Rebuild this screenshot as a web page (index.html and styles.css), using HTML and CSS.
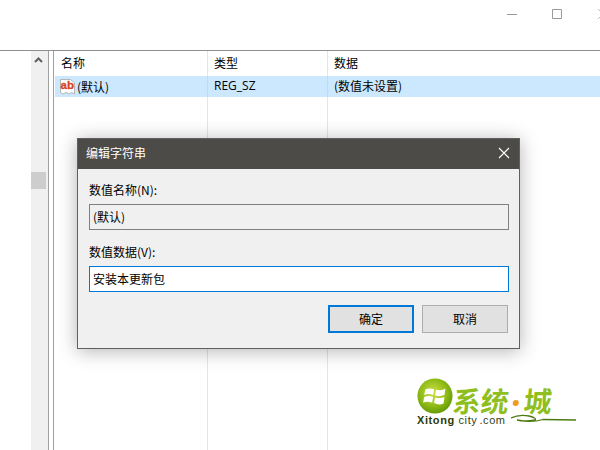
FILE: index.html
```html
<!DOCTYPE html>
<html lang="zh">
<head>
<meta charset="utf-8">
<title>编辑字符串</title>
<link rel="stylesheet" href="styles.css">
</head>
<body>
<div class="window">
  <div class="topbar">
    <svg class="win-icons" width="100" height="30" viewBox="0 0 100 30">
      <path d="M7 14.500H17" stroke="#999" fill="none"/>
      <path d="M52.500 9.500H61.500V18.500H52.500Z" stroke="#999" fill="none"/>
      <path d="M98 9L103 14M98 19L103 14" stroke="#bbb" fill="none"/>
    </svg>
  </div>
  <div class="panes">
    <div class="tree">
      <div class="scroll">
        <svg class="chev" width="9" height="6" viewBox="0 0 9 6"><path d="M1 5L4.500 1.500L8 5" stroke="#606060" stroke-width="2" fill="none"/></svg>
        <div class="thumb"></div>
      </div>
    </div>
    <div class="list">
      <div class="head">
        <div class="c1">名称</div>
        <div class="c2">类型</div>
        <div class="c3">数据</div>
      </div>
      <div class="row">
        <div class="c1 name">
          <svg class="ab" width="17" height="17" viewBox="0 0 17 17">
            <path d="M1.500 1.500H11.500L15.500 5V16L13 14.500L10 16L7 14.500L4 16L1.500 14.500Z" fill="#fff" stroke="#b5b5b5"/>
            <rect x="2" y="3" width="11" height="9" fill="#fff"/>
            <text x="1.500" y="11" class="abtext">ab</text>
          </svg>
          <span>(默认)</span>
        </div>
        <div class="c2">REG_SZ</div>
        <div class="c3">(数值未设置)</div>
      </div>
      <div class="rest">
        <div class="c1"></div>
        <div class="c2"></div>
        <div class="c3"></div>
      </div>
    </div>
  </div>
</div>

<div class="dialog">
  <div class="titlebar">
    <span>编辑字符串</span>
    <svg width="12" height="12" viewBox="0 0 12 12"><path d="M1 1L11 11M11 1L1 11" stroke="#fff" stroke-width="1.100" fill="none"/></svg>
  </div>
  <div class="body">
    <div class="label">数值名称(N):</div>
    <div class="field readonly">(默认)</div>
    <div class="label second">数值数据(V):</div>
    <div class="field active">安装本更新包</div>
    <div class="buttons">
      <div class="btn primary">确定</div>
      <div class="btn">取消</div>
    </div>
  </div>
</div>

<div class="logo">
  <svg class="orb" width="36" height="36" viewBox="0 0 38 38">
    <defs>
      <radialGradient id="g" cx="0.450" cy="0.400" r="0.650">
        <stop offset="0" stop-color="#cfe04a"/>
        <stop offset="0.600" stop-color="#8dba14"/>
        <stop offset="1" stop-color="#5c9406"/>
      </radialGradient>
    </defs>
    <circle cx="19" cy="19" r="18.500" fill="url(#g)"/>
    <path d="M9 12Q13 10 18 12L17 18Q12 16 7.500 18Z M20 12.500Q25 14 30 11L29 18Q24 20 19 18.500Z M7.500 20Q12 18 17 20L16 26Q11 24 6.500 26Z M19 20.500Q24 22 29 20L28 27Q23 29 18 26.500Z" fill="#fff"/>
  </svg>
  <div class="brand">系统<i></i>城</div>
  <div class="domain"><b>Xitong</b> city<small>.com</small></div>
  <svg class="swoosh" width="66" height="10" viewBox="0 0 66 10"><path d="M0 5Q8 1 18 3Q26 5 24 7Q14 9 6 7Q20 10 32 6.500L65 7" stroke="#4d7a10" stroke-width="1.300" fill="none"/></svg>
</div>
</body>
</html>
```
FILE: styles.css
```css
* { box-sizing: border-box; }
html, body { margin: 0; padding: 0; }
body {
  width: 600px;
  height: 450px;
  overflow: hidden;
  position: relative;
  background: #fff;
  font-family: "Noto Sans CJK SC", "Noto Sans", sans-serif;
  font-size: 12px;
  color: #000;
}
.window { display: flex; flex-direction: column; height: 450px; }
.topbar {
  height: 50px;
  flex: none;
  display: flex;
  justify-content: flex-end;
  overflow: hidden;
}
.win-icons { flex: none; }
.panes {
  flex: 1;
  display: flex;
  border-top: 1px solid #8f8f8f;
}
.tree {
  width: 49px;
  flex: none;
  display: flex;
  justify-content: flex-end;
  border-right: 1px solid #a0a0a0;
}
.scroll {
  width: 17px;
  background: #f0f0f0;
  display: flex;
  flex-direction: column;
  align-items: center;
  padding-top: 6px;
}
.chev { flex: none; margin-left: -2px; }
.thumb {
  width: 15px;
  height: 17px;
  margin-top: 109px;
  background: #cdcdcd;
  align-self: flex-start;
}
.list {
  flex: 1;
  margin-left: 4px;
  border-left: 1px solid #a0a0a0;
  display: flex;
  flex-direction: column;
  padding-left: 1px;
}
.head, .row, .rest { display: grid; grid-template-columns: 152px 120px 1fr; }
.head { height: 25px; line-height: 23px; }
.head .c1, .head .c2, .head .c3 { padding-left: 6px; }
.head .c2, .head .c3, .rest .c2, .rest .c3 { border-left: 1px solid #e5e5e5; }
.row {
  height: 21px;
  line-height: 20px;
  background: #cce8ff;
}
.row .c2, .row .c3 { padding-left: 6px; border-left: 1px solid #bcdcf4; }
.row .c2 { font-family: "Open Sans", "Noto Sans", sans-serif; }
.name { display: flex; align-items: center; padding-left: 4px; }
.ab { flex: none; margin-right: 1px; }
.abtext {
  font-family: "Liberation Sans", sans-serif;
  font-weight: 700;
  font-size: 11.500px;
  fill: #d8431f;
  stroke: #d8431f;
  stroke-width: 0.300px;
}
.rest { flex: 1; }

.dialog {
  position: absolute;
  left: 77px;
  top: 138px;
  width: 443px;
  height: 211px;
  background: #f0f0f0;
  border: 1px solid #5f5f5f;
  box-shadow: 0 2px 18px rgba(0, 0, 0, 0.3);
  display: flex;
  flex-direction: column;
}
.titlebar {
  height: 30px;
  flex: none;
  background: #4d4b48;
  color: #fff;
  display: flex;
  align-items: center;
  justify-content: space-between;
  padding: 0 9px 3px 8px;
}
.body { padding: 13px 10px 0 11px; flex: 1; }
.label { height: 22px; line-height: 16px; }
.second { margin-top: 14px; }
.field {
  height: 26px;
  line-height: 23px;
  padding-left: 3px;
  border: 1px solid #7f7f7f;
}
.readonly { background: #f0f0f0; }
.active { background: #fff; border-color: #0078d7; }
.buttons {
  display: flex;
  justify-content: flex-end;
  gap: 8px;
  margin-top: 13px;
  padding-right: 1px;
}
.btn {
  width: 86px;
  height: 28px;
  line-height: 26px;
  text-align: center;
  background: #e1e1e1;
  border: 1px solid #adadad;
}
.primary { border: 2px solid #0078d7; line-height: 24px; }

.logo {
  position: absolute;
  left: 417px;
  top: 378px;
  width: 150px;
  height: 60px;
}
.orb { position: absolute; left: 0; top: 0; }
.brand {
  position: absolute;
  left: 36px;
  top: 6px;
  display: flex;
  align-items: center;
  font-size: 28px;
  line-height: 33px;
  font-weight: 700;
  color: #8fbf1e;
  white-space: nowrap;
  transform: skewX(-6deg);
}
.brand i {
  width: 6px;
  height: 6px;
  border-radius: 50%;
  background: #f29a1f;
  margin: 4px 5px 0 4px;
}
.domain {
  position: absolute;
  left: 0;
  top: 36px;
  font-family: "Liberation Sans", sans-serif;
  font-size: 11px;
  line-height: 13px;
  letter-spacing: 0.600px;
  color: #33420f;
  white-space: nowrap;
}
.domain b { font-weight: 700; color: #2d3a0a; }
.domain small { font-size: 11px; margin-left: 2px; }
.swoosh { position: absolute; left: 94px; top: 35px; }
```
